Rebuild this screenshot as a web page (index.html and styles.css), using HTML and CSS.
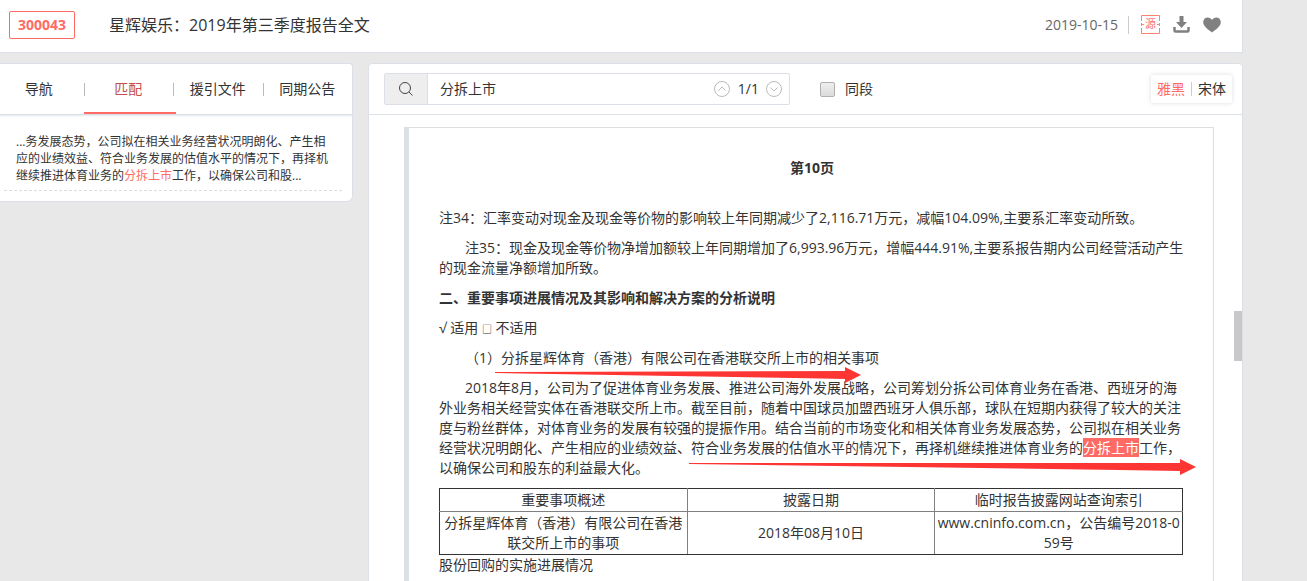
FILE: index.html
```html
<!DOCTYPE html>
<html lang="zh-CN">
<head>
<meta charset="utf-8">
<title>星辉娱乐：2019年第三季度报告全文</title>
<link rel="stylesheet" href="styles.css">
</head>
<body>
<div class="app">
  <header class="header">
    <a class="code" href="#">300043</a>
    <h1 class="title">星辉娱乐：2019年第三季度报告全文</h1>
    <time class="date" datetime="2019-10-15">2019-10-15</time>
    <button class="icon-button" type="button" aria-label="查看源文件">
      <svg width="20" height="19" viewBox="0 0 20 19"><path d="M.5 6V.5h18V6M.5 13v5.500h18V13M0 9.500h3M16 9.500h3M.5 8v3M18.500 8v3" fill="none" stroke="#ff8273"/><text class="source-text" x="9.500" y="13" text-anchor="middle">源</text></svg>
    </button>
    <button class="icon-button" type="button" aria-label="下载">
      <svg width="18" height="18" viewBox="0 0 18 18"><path d="M6.500 0h4v6h3.500L8.500 12 3 6h3.500z" fill="#808080"/><path d="M1.500 11v3.500q0 1 1 1h12q1 0 1-1V11" fill="none" stroke="#808080" stroke-width="2.500"/></svg>
    </button>
    <button class="icon-button" type="button" aria-label="收藏">
      <svg width="18" height="18" viewBox="0 0 18 18"><path d="M9 16.500C7 14.800.2 10.800.2 6.200.2 3.200 2.300 1.500 4.600 1.500 6.600 1.500 8.200 2.500 9 4c.8-1.500 2.400-2.500 4.400-2.500 2.300 0 4.400 1.700 4.400 4.700 0 4.600-6.800 8.600-8.800 10.300z" fill="#808080"/></svg>
    </button>
  </header>

  <div class="columns">
    <aside class="sidebar">
      <nav class="tabs">
        <button class="tab" type="button">导航</button>
        <button class="tab tab-active" type="button">匹配</button>
        <button class="tab" type="button">援引文件</button>
        <button class="tab" type="button">同期公告</button>
      </nav>
      <div class="matches">
        <p class="match">...务发展态势，公司拟在相关业务经营状况明朗化、产生相应的业绩效益、符合业务发展的估值水平的情况下，再择机继续推进体育业务的<em>分拆上市</em>工作，以确保公司和股...</p>
      </div>
    </aside>

    <main class="viewer">
      <div class="toolbar">
        <div class="search">
          <button class="search-button" type="button" aria-label="搜索">
            <svg width="16" height="16" viewBox="0 0 16 16" fill="none" stroke="#444"><circle cx="7" cy="7" r="5.500"/><path d="M11 11l3.500 3.500"/></svg>
          </button>
          <input class="search-input" type="text" value="分拆上市" aria-label="关键词">
          <button class="step" type="button" aria-label="上一个">
            <svg width="16" height="16" viewBox="0 0 16 16" fill="none" stroke="#bbb"><circle cx="8" cy="8" r="7.500"/><path d="M4.500 9.500L8 6l3.500 3.500"/></svg>
          </button>
          <span class="count">1/1</span>
          <button class="step" type="button" aria-label="下一个">
            <svg width="16" height="16" viewBox="0 0 16 16" fill="none" stroke="#bbb"><circle cx="8" cy="8" r="7.500"/><path d="M4.500 6.500L8 10l3.500-3.500"/></svg>
          </button>
        </div>
        <label class="same"><input class="checkbox" type="checkbox">同段</label>
        <div class="fonts">
          <button class="font font-active" type="button">雅黑</button>
          <button class="font" type="button">宋体</button>
        </div>
      </div>

      <div class="document">
        <article class="paper">
          <h2 class="page-number">第10页</h2>
          <p>注34：汇率变动对现金及现金等价物的影响较上年同期减少了2,116.71万元，减幅104.09%,主要系汇率变动所致。</p>
          <p class="indent">注35：现金及现金等价物净增加额较上年同期增加了6,993.96万元，增幅444.91%,主要系报告期内公司经营活动产生的现金流量净额增加所致。</p>
          <h3>二、重要事项进展情况及其影响和解决方案的分析说明</h3>
          <p>√ 适用 <span class="box">□</span> 不适用</p>
          <p class="indent">（1）分拆星辉体育（香港）有限公司在香港联交所上市的相关事项</p>
          <p class="indent">2018年8月，公司为了促进体育业务发展、推进公司海外发展战略，公司筹划分拆公司体育业务在香港、西班牙的海外业务相关经营实体在香港联交所上市。截至目前，随着中国球员加盟西班牙人俱乐部，球队在短期内获得了较大的关注度与粉丝群体，对体育业务的发展有较强的提振作用。结合当前的市场变化和相关体育业务发展态势，公司拟在相关业务经营状况明朗化、产生相应的业绩效益、符合业务发展的估值水平的情况下，再择机继续推进体育业务的<mark>分拆上市</mark>工作，以确保公司和股东的利益最大化。</p>
          <table class="items">
            <thead>
              <tr><th>重要事项概述</th><th>披露日期</th><th>临时报告披露网站查询索引</th></tr>
            </thead>
            <tbody>
              <tr><td>分拆星辉体育（香港）有限公司在香港联交所上市的事项</td><td>2018年08月10日</td><td>www.cninfo.com.cn，公告编号2018-059号</td></tr>
            </tbody>
          </table>
          <p>股份回购的实施进展情况</p>
          <svg class="arrow arrow-first" width="366" height="16" viewBox="0 0 366 16"><path d="M0 5L350 4V0l16 8-16 8v-4L300 11 0 6z" fill="#fd3634"/></svg>
          <svg class="arrow arrow-second" width="508" height="16" viewBox="0 0 508 16"><path d="M0 4h491V0l16 8-16 8v-4L430 11 0 5z" fill="#fd3634"/></svg>
        </article>
        <div class="scroll-thumb"></div>
      </div>
    </main>
  </div>
</div>
</body>
</html>
```

FILE: styles.css
```css
* {
  box-sizing: border-box;
}

body {
  margin: 0;
  background: #e8e8e8;
  color: #333;
  font: 14px/20px "Open Sans", "Noto Sans CJK SC", sans-serif;
}

button,
input {
  margin: 0;
  padding: 0;
  border: 0;
  background: none;
  color: inherit;
  font: inherit;
}

svg {
  display: block;
}

h1, h2, h3, p {
  margin: 0;
}

.app {
  display: flex;
  flex-direction: column;
  height: 100vh;
  min-width: 1080px;
  padding-right: 64px;
  overflow: hidden;
}

.header {
  display: flex;
  flex: none;
  align-items: center;
  height: 53px;
  padding: 0 21px 3px 9px;
  border: solid #dae0e5;
  border-width: 0 1px 1px 0;
  background: #fff;
}

.code {
  padding: 3px 8px;
  border: 1px solid #ff6b64;
  border-radius: 2px;
  color: #ff6b64;
  font-weight: 700;
  text-decoration: none;
}

.title {
  flex: 1;
  padding-left: 34px;
  font-size: 16px;
  font-weight: 400;
}

.date {
  padding-right: 10px;
  border-right: 1px solid #ccc;
  color: #666;
  line-height: 18px;
}

.icon-button {
  margin-left: 12px;
}

.source-text {
  fill: #ff7070;
  font-size: 11px;
}

.columns {
  display: flex;
  flex: 1;
  gap: 15px;
  min-height: 0;
  padding-top: 10px;
}

.sidebar {
  flex: none;
  width: 353px;
}

.tabs,
.toolbar {
  position: relative;
  height: 52px;
  border: 1px solid #dae0e5;
  background: #fff;
  box-shadow: 0 1px 2px #e4e8eb;
}

.tabs {
  display: grid;
  grid-template-columns: repeat(4, 1fr);
  padding-bottom: 1px;
  margin-left: -6px;
  border-left: 0;
  border-radius: 0 4px 0 0;
}

.tab {
  position: relative;
}

.tab + .tab::before {
  position: absolute;
  top: 19px;
  left: 0;
  height: 13px;
  border-left: 1px solid #bbb;
  content: "";
}

.tab-active {
  color: #c0504d;
}

.tab-active::after {
  position: absolute;
  right: -3px;
  bottom: -1px;
  left: 0;
  height: 2px;
  background: #ff6b64;
  content: "";
}

.matches {
  padding: 18px 10px 10px 4px;
  border: solid #dae0e5;
  border-width: 0 1px 1px 0;
  border-radius: 0 0 6px 0;
  background: #fff;
}

.match {
  padding: 0 12px 6px;
  border-bottom: 1px dashed #ddd;
  font-size: 12px;
  line-height: 17px;
}

.match em {
  color: #ff6b64;
  font-style: normal;
}

.viewer {
  display: flex;
  flex: 1;
  flex-direction: column;
  min-width: 0;
}

.toolbar {
  display: flex;
  flex: none;
  align-items: center;
  padding: 0 10px 0 15px;
  border-radius: 4px 4px 0 0;
}

.search {
  display: flex;
  align-items: center;
  width: 406px;
  height: 32px;
  padding-right: 7px;
  border: 1px solid #dae0e5;
  border-radius: 2px;
}

.search-button {
  display: flex;
  align-items: center;
  justify-content: center;
  width: 43px;
  height: 30px;
  border-right: 1px solid #dae0e5;
  background: #eee;
}

.search-input {
  flex: 1;
  min-width: 0;
  padding-left: 12px;
  outline: 0;
}

.count {
  padding: 0 7px 0 8px;
}

.same {
  display: flex;
  gap: 10px;
  align-items: center;
  margin-left: 30px;
}

.checkbox {
  width: 15px;
  height: 15px;
  border: 1px solid #b0b0b0;
  border-radius: 2px;
  background: linear-gradient(#eee, #dcdcdc);
  appearance: none;
}

.fonts {
  display: flex;
  align-items: center;
  height: 28px;
  margin-left: auto;
  border-radius: 2px;
  box-shadow: 0 0 5px #ddd;
}

.font {
  padding: 0 6px;
  line-height: 14px;
}

.font + .font {
  border-left: 1px solid #ccc;
}

.font-active {
  color: #ff6b64;
}

.document {
  position: relative;
  display: flex;
  flex: 1;
  min-height: 0;
  padding: 12px 28px 0 35px;
  border: solid #dae0e5;
  border-width: 0 1px;
  background: #fff;
}

.paper {
  position: relative;
  flex: 1;
  min-width: 0;
  padding: 30px 28px 0 30px;
  border: 1px solid #dcdfe2;
  border-left: 5px solid #dae0e5;
  border-bottom: 0;
}

.paper p,
.paper h3 {
  margin-bottom: 10px;
  font-size: 14px;
}

.paper .page-number {
  margin-bottom: 30px;
  font-size: 14px;
  text-align: center;
}

.indent {
  text-indent: 26px;
}

.box {
  font-size: 10px;
  line-height: 1;
}

mark {
  background: #ff6b64;
  color: #fff;
}

.items {
  width: calc(100% - 2px);
  border: 1px solid #333;
  border-collapse: collapse;
  table-layout: fixed;
  text-align: center;
  word-break: break-all;
}

.items th,
.items td {
  padding: 1px;
  border: 1px solid #808080;
  font-weight: 400;
}

.items tr > :first-child {
  border-left-color: #333;
}

.items tr > :last-child {
  border-right-color: #333;
}

.items th {
  border-top-color: #333;
}

.items td {
  border-bottom-color: #333;
}

.arrow {
  position: absolute;
}

.arrow-first {
  top: 239px;
  left: 86px;
}

.arrow-second {
  top: 331px;
  left: 280px;
}

.scroll-thumb {
  position: absolute;
  top: 196px;
  right: 0;
  width: 8px;
  height: 50px;
  background: #c8c8c8;
}
```
